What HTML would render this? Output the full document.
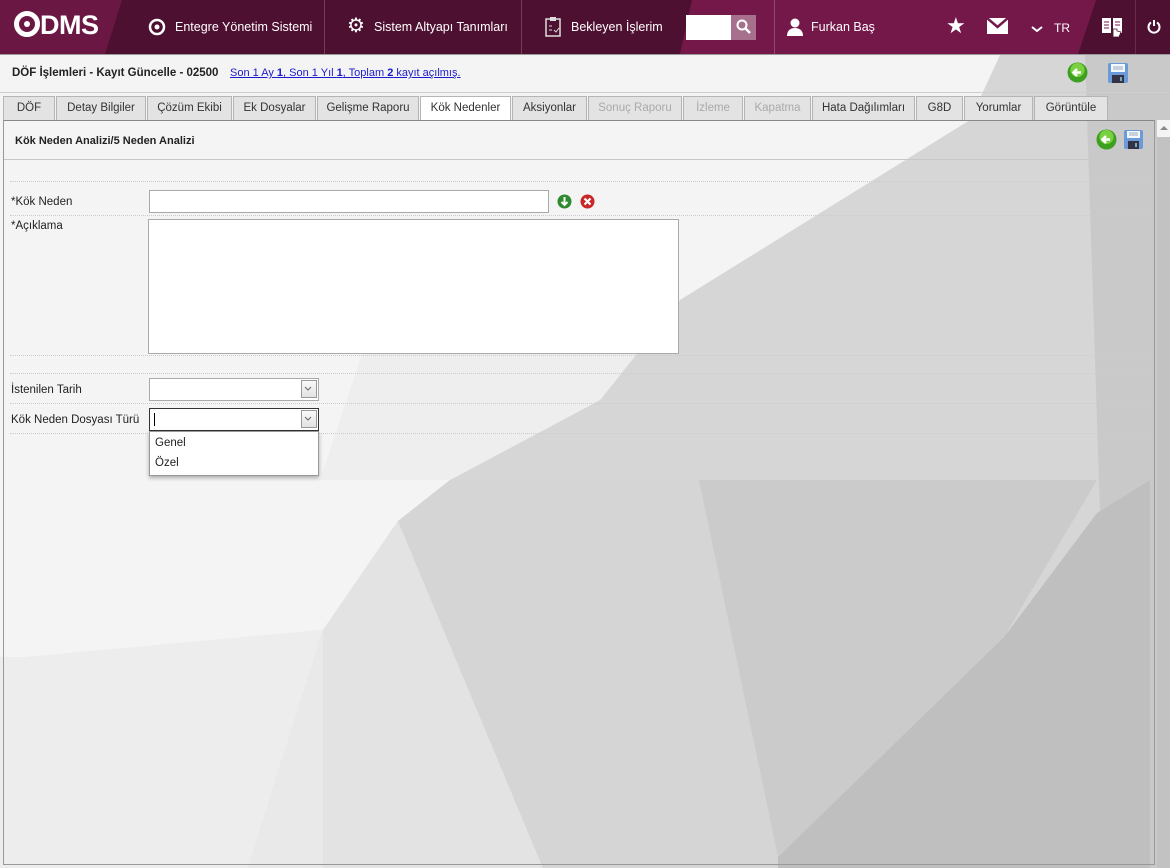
<!DOCTYPE html>
<html><head><meta charset="utf-8"><style>
*{margin:0;padding:0;box-sizing:border-box}
body{width:1170px;height:868px;overflow:hidden;font-family:"Liberation Sans",sans-serif;font-size:11px;color:#222;position:relative;background:#e6e6e6}
.a{position:absolute}
.hd{left:0;top:0;width:1170px;height:54px;background:#4e1030;color:#fff;font-size:12.5px}
.hd .t{position:absolute;top:20px;white-space:nowrap}
.sep{position:absolute;top:0;width:1px;height:54px;background:#7a3a5a}
.tab{position:absolute;top:96px;height:24px;border:1px solid #b5b5b5;border-bottom:none;background:#e3e3e3;text-align:center;line-height:22px;font-size:11.5px;color:#333}
.tab.dis{color:#aaa}
.tab.act{background:#fff;height:25px}
.dot{position:absolute;left:10px;width:1138px;border-top:1px dotted #ccc}
.lbl{position:absolute;left:11px;font-size:11.5px;color:#222}
.inp{position:absolute;background:#fff;border:1px solid #aaa}
.sel .ar{position:absolute;right:1px;top:1px;width:16px;height:18px;border:1px solid #999;background:linear-gradient(#fafafa,#e2e2e2)}
</style></head><body>
<svg class="a" style="left:0;top:55px" width="1170" height="813" viewBox="0 55 1170 813">
<rect x="0" y="55" width="1170" height="813" fill="#d6d6d6"/>
<polygon points="0,55 1000,55 970,120 680,300 600,400 450,480 398,521 323,630 28,657 0,657" fill="#f4f4f4"/>
<polygon points="380,300 680,300 600,400 450,480 320,480" fill="#eeeeee"/>
<polygon points="1085,55 1170,55 1170,868 1150,868 1150,480 1100,513" fill="#c9c9c9"/>
<polygon points="0,657 28,657 323,630 248,868 0,868" fill="#ededed"/>
<polygon points="323,630 248,868 323,868" fill="#e9e9e9"/>
<polygon points="398,521 323,630 323,868 543,868" fill="#e3e3e3"/>
<polygon points="450,480 699,480 778,857 778,868 543,868 398,521" fill="#d5d5d5"/>
<polygon points="699,480 1097,480 1004,637 778,857" fill="#cbcbcb"/>
<polygon points="1004,637 1097,513 1150,480 1150,868 778,868 778,857" fill="#bfbfbf"/>
</svg>
<div class="a hd">
 <svg class="a" style="left:0;top:0" width="1170" height="54">
  <polygon points="0,0 122,0 105,54 0,54" fill="#6a1744"/>
  <polygon points="692,0 1096,0 1078,54 680,54" fill="#74184a"/>
 </svg>
 <div class="a" style="left:14px;top:10px;font-size:27px;font-weight:bold;letter-spacing:-0.5px">
  <span style="display:inline-block;width:26px;height:26px;border:5px solid #fff;border-radius:50%;vertical-align:-3px;position:relative"><span style="position:absolute;left:5px;top:5px;width:6px;height:6px;background:#fff;border-radius:50%"></span></span>DMS</div>
 <svg class="a" style="left:148px;top:18px" width="18" height="18"><circle cx="9" cy="9" r="7" fill="none" stroke="#fff" stroke-width="2.5"/><circle cx="9" cy="9" r="2.5" fill="#fff"/></svg>
 <div class="t" style="left:175px">Entegre Yönetim Sistemi</div>
 <div class="sep" style="left:324px"></div>
 <div class="a" style="left:347px;top:16px;font-size:20px;line-height:20px">⚙</div>
 <div class="t" style="left:374px">Sistem Altyapı Tanımları</div>
 <div class="sep" style="left:521px"></div>
 <svg class="a" style="left:544px;top:16px" width="18" height="22"><rect x="2" y="3" width="14" height="17" fill="none" stroke="#ddd" stroke-width="1.5"/><rect x="6" y="1" width="6" height="4" fill="#ddd"/><path d="M5 10h3M5 14h3M10 14l2 2 3-4" stroke="#ddd" fill="none"/></svg>
 <div class="t" style="left:571px">Bekleyen İşlerim</div>
 <div class="a" style="left:686px;top:15px;width:45px;height:25px;background:#fff"></div>
 <div class="a" style="left:731px;top:15px;width:25px;height:25px;background:#a7708d"></div>
 <svg class="a" style="left:736px;top:19px" width="16" height="16"><circle cx="6" cy="6" r="4.5" fill="none" stroke="#fff" stroke-width="2"/><path d="M9 9l5 5" stroke="#fff" stroke-width="2.5"/></svg>
 <div class="sep" style="left:774px;background:#8e4a6e"></div>
 <svg class="a" style="left:786px;top:17px" width="18" height="20"><circle cx="9" cy="6" r="4.5" fill="#fff"/><path d="M1 19c0-6 4-8 8-8s8 2 8 8z" fill="#fff"/></svg>
 <div class="t" style="left:811px">Furkan Baş</div>
 <div class="a" style="left:946px;top:13px;font-size:22px">★</div>
 <svg class="a" style="left:987px;top:18px" width="21" height="16"><rect width="21" height="16" fill="#fff"/><path d="M0 0l10.5 9L21 0" stroke="#74184a" stroke-width="2.5" fill="none"/></svg>
 <svg class="a" style="left:1031px;top:26px" width="12" height="8"><path d="M1 1l5 4 5-4" stroke="#fff" stroke-width="2" fill="none"/></svg>
 <div class="t" style="left:1054px;top:21px;font-size:12px">TR</div>
 <svg class="a" style="left:1100px;top:15px" width="24" height="24"><path d="M2 3h9v15H2zM13 3h9v15h-9z" fill="#fff"/><path d="M4 7h5M4 10h5M4 13h5M15 7h5M15 10h5" stroke="#74184a"/><path d="M13 14v8h6l2-5-4-1v-2z" fill="#fff" stroke="#4e1030" stroke-width=".8"/></svg>
 <div class="sep" style="left:1135px;background:#6a2a4a"></div>
 <svg class="a" style="left:1147px;top:19px" width="14" height="15"><path d="M4 3.5A5.5 5.5 0 1 0 10 3.5" stroke="#fff" stroke-width="2" fill="none"/><path d="M7 1v6" stroke="#fff" stroke-width="2"/></svg>
</div>
<div class="a" style="left:0;top:54px;width:1170px;height:1px;background:#999"></div>
<div class="a" style="left:12px;top:67px;font-weight:bold;font-size:11.5px">DÖF İşlemleri - Kayıt Güncelle - 02500</div>
<div class="a" style="left:230px;top:67px;font-size:11px;color:#1a1acc;text-decoration:underline">Son 1 Ay <b>1</b>, Son 1 Yıl <b>1</b>, Toplam <b>2</b> kayıt açılmış.</div>
<svg class="a" style="left:1067px;top:62px" width="21" height="21"><circle cx="10.5" cy="10.5" r="10" fill="#3ea020"/><circle cx="10.5" cy="8" r="7" fill="#7ad040"/><path d="M14 10.5H7M10 7l-3.5 3.5L10 14" stroke="#fff" stroke-width="2.5" fill="none"/></svg>
<svg class="a" style="left:1107px;top:62px" width="22" height="22"><rect x="1" y="1" width="20" height="20" rx="2" fill="#6a9ad8"/><rect x="4" y="2" width="14" height="8" fill="#f4f8ff"/><path d="M6 5h10M6 7h10" stroke="#9ab"/><rect x="5" y="13" width="12" height="8" fill="#334"/><rect x="13" y="15" width="2" height="4" fill="#7ab"/></svg>
<div class="a" style="left:0;top:92px;width:1170px;height:1px;background:#cfcfcf"></div>
<div class="tab" style="left:3px;width:52px">DÖF</div>
<div class="tab" style="left:56px;width:90px">Detay Bilgiler</div>
<div class="tab" style="left:147px;width:85px">Çözüm Ekibi</div>
<div class="tab" style="left:233px;width:83px">Ek Dosyalar</div>
<div class="tab" style="left:317px;width:102px">Gelişme Raporu</div>
<div class="tab act" style="left:420px;width:91px">Kök Nedenler</div>
<div class="tab" style="left:512px;width:75px">Aksiyonlar</div>
<div class="tab dis" style="left:588px;width:94px">Sonuç Raporu</div>
<div class="tab dis" style="left:683px;width:60px">İzleme</div>
<div class="tab dis" style="left:744px;width:67px">Kapatma</div>
<div class="tab" style="left:812px;width:103px">Hata Dağılımları</div>
<div class="tab" style="left:916px;width:47px">G8D</div>
<div class="tab" style="left:964px;width:69px">Yorumlar</div>
<div class="tab" style="left:1034px;width:74px">Görüntüle</div>
<div class="a" style="left:3px;top:120px;width:1152px;height:745px;border:1px solid #999;border-top:1px solid #888"></div>
<div class="a" style="left:1157px;top:120px;width:13px;height:748px;background:#c2c2c2"></div>
<div class="a" style="left:1157px;top:120px;width:13px;height:17px;background:#f4f4f4"></div>
<div class="a" style="left:1160px;top:126px;border:4px solid transparent;border-bottom:4px solid #888;border-top:none"></div>
<div class="a" style="left:15px;top:135px;font-weight:bold;font-size:11px">Kök Neden Analizi/5 Neden Analizi</div>
<svg class="a" style="left:1096px;top:129px" width="21" height="21"><circle cx="10.5" cy="10.5" r="10" fill="#3ea020"/><circle cx="10.5" cy="8" r="7" fill="#7ad040"/><path d="M14 10.5H7M10 7l-3.5 3.5L10 14" stroke="#fff" stroke-width="2.5" fill="none"/></svg>
<svg class="a" style="left:1123px;top:129px" width="21" height="21"><rect x="1" y="1" width="19" height="19" rx="2" fill="#6a9ad8"/><rect x="4" y="2" width="13" height="7" fill="#f4f8ff"/><path d="M6 4h9M6 6h9" stroke="#9ab"/><rect x="5" y="12" width="11" height="8" fill="#334"/><rect x="12" y="14" width="2" height="4" fill="#7ab"/></svg>
<div class="a" style="left:4px;top:159px;width:1150px;height:1px;background:#c8c8c8"></div>
<div class="dot" style="top:181px"></div>
<div class="dot" style="top:215px"></div>
<div class="dot" style="top:355px"></div>
<div class="dot" style="top:373px"></div>
<div class="dot" style="top:403px"></div>
<div class="dot" style="top:433px"></div>
<div class="lbl" style="top:196px">*Kök Neden</div>
<div class="inp" style="left:149px;top:190px;width:400px;height:23px"></div>
<svg class="a" style="left:557px;top:194px" width="15" height="15"><circle cx="7.5" cy="7.5" r="7" fill="#2f8a2f"/><path d="M7.5 3v7M4.5 8l3 3 3-3" stroke="#fff" stroke-width="2" fill="none"/></svg>
<svg class="a" style="left:580px;top:194px" width="15" height="15"><circle cx="7.5" cy="7.5" r="7" fill="#c82828"/><path d="M4.5 4.5l6 6M10.5 4.5l-6 6" stroke="#fff" stroke-width="2.2"/></svg>
<div class="lbl" style="top:220px">*Açıklama</div>
<div class="inp" style="left:148px;top:219px;width:531px;height:135px"></div>
<div class="lbl" style="top:384px">İstenilen Tarih</div>
<div class="inp sel" style="left:149px;top:378px;width:170px;height:23px"><div class="ar"></div></div>
<div class="lbl" style="top:414px">Kök Neden Dosyası Türü</div>
<div class="inp sel" style="left:149px;top:408px;width:170px;height:23px;border-color:#333"><div class="ar"></div><div class="a" style="left:4px;top:4px;width:1px;height:13px;background:#000"></div></div>
<svg class="a" style="left:303px;top:384px" width="10" height="10"><path d="M2 3l3 3 3-3" stroke="#666" fill="none"/></svg>
<svg class="a" style="left:303px;top:414px" width="10" height="10"><path d="M2 3l3 3 3-3" stroke="#666" fill="none"/></svg>
<div class="a" style="left:149px;top:431px;width:170px;height:45px;background:#fff;border:1px solid #999;box-shadow:0 2px 4px rgba(0,0,0,.3)"></div>
<div class="a" style="left:155px;top:437px;font-size:11.5px">Genel</div>
<div class="a" style="left:155px;top:457px;font-size:11.5px">Özel</div>
</body></html>
